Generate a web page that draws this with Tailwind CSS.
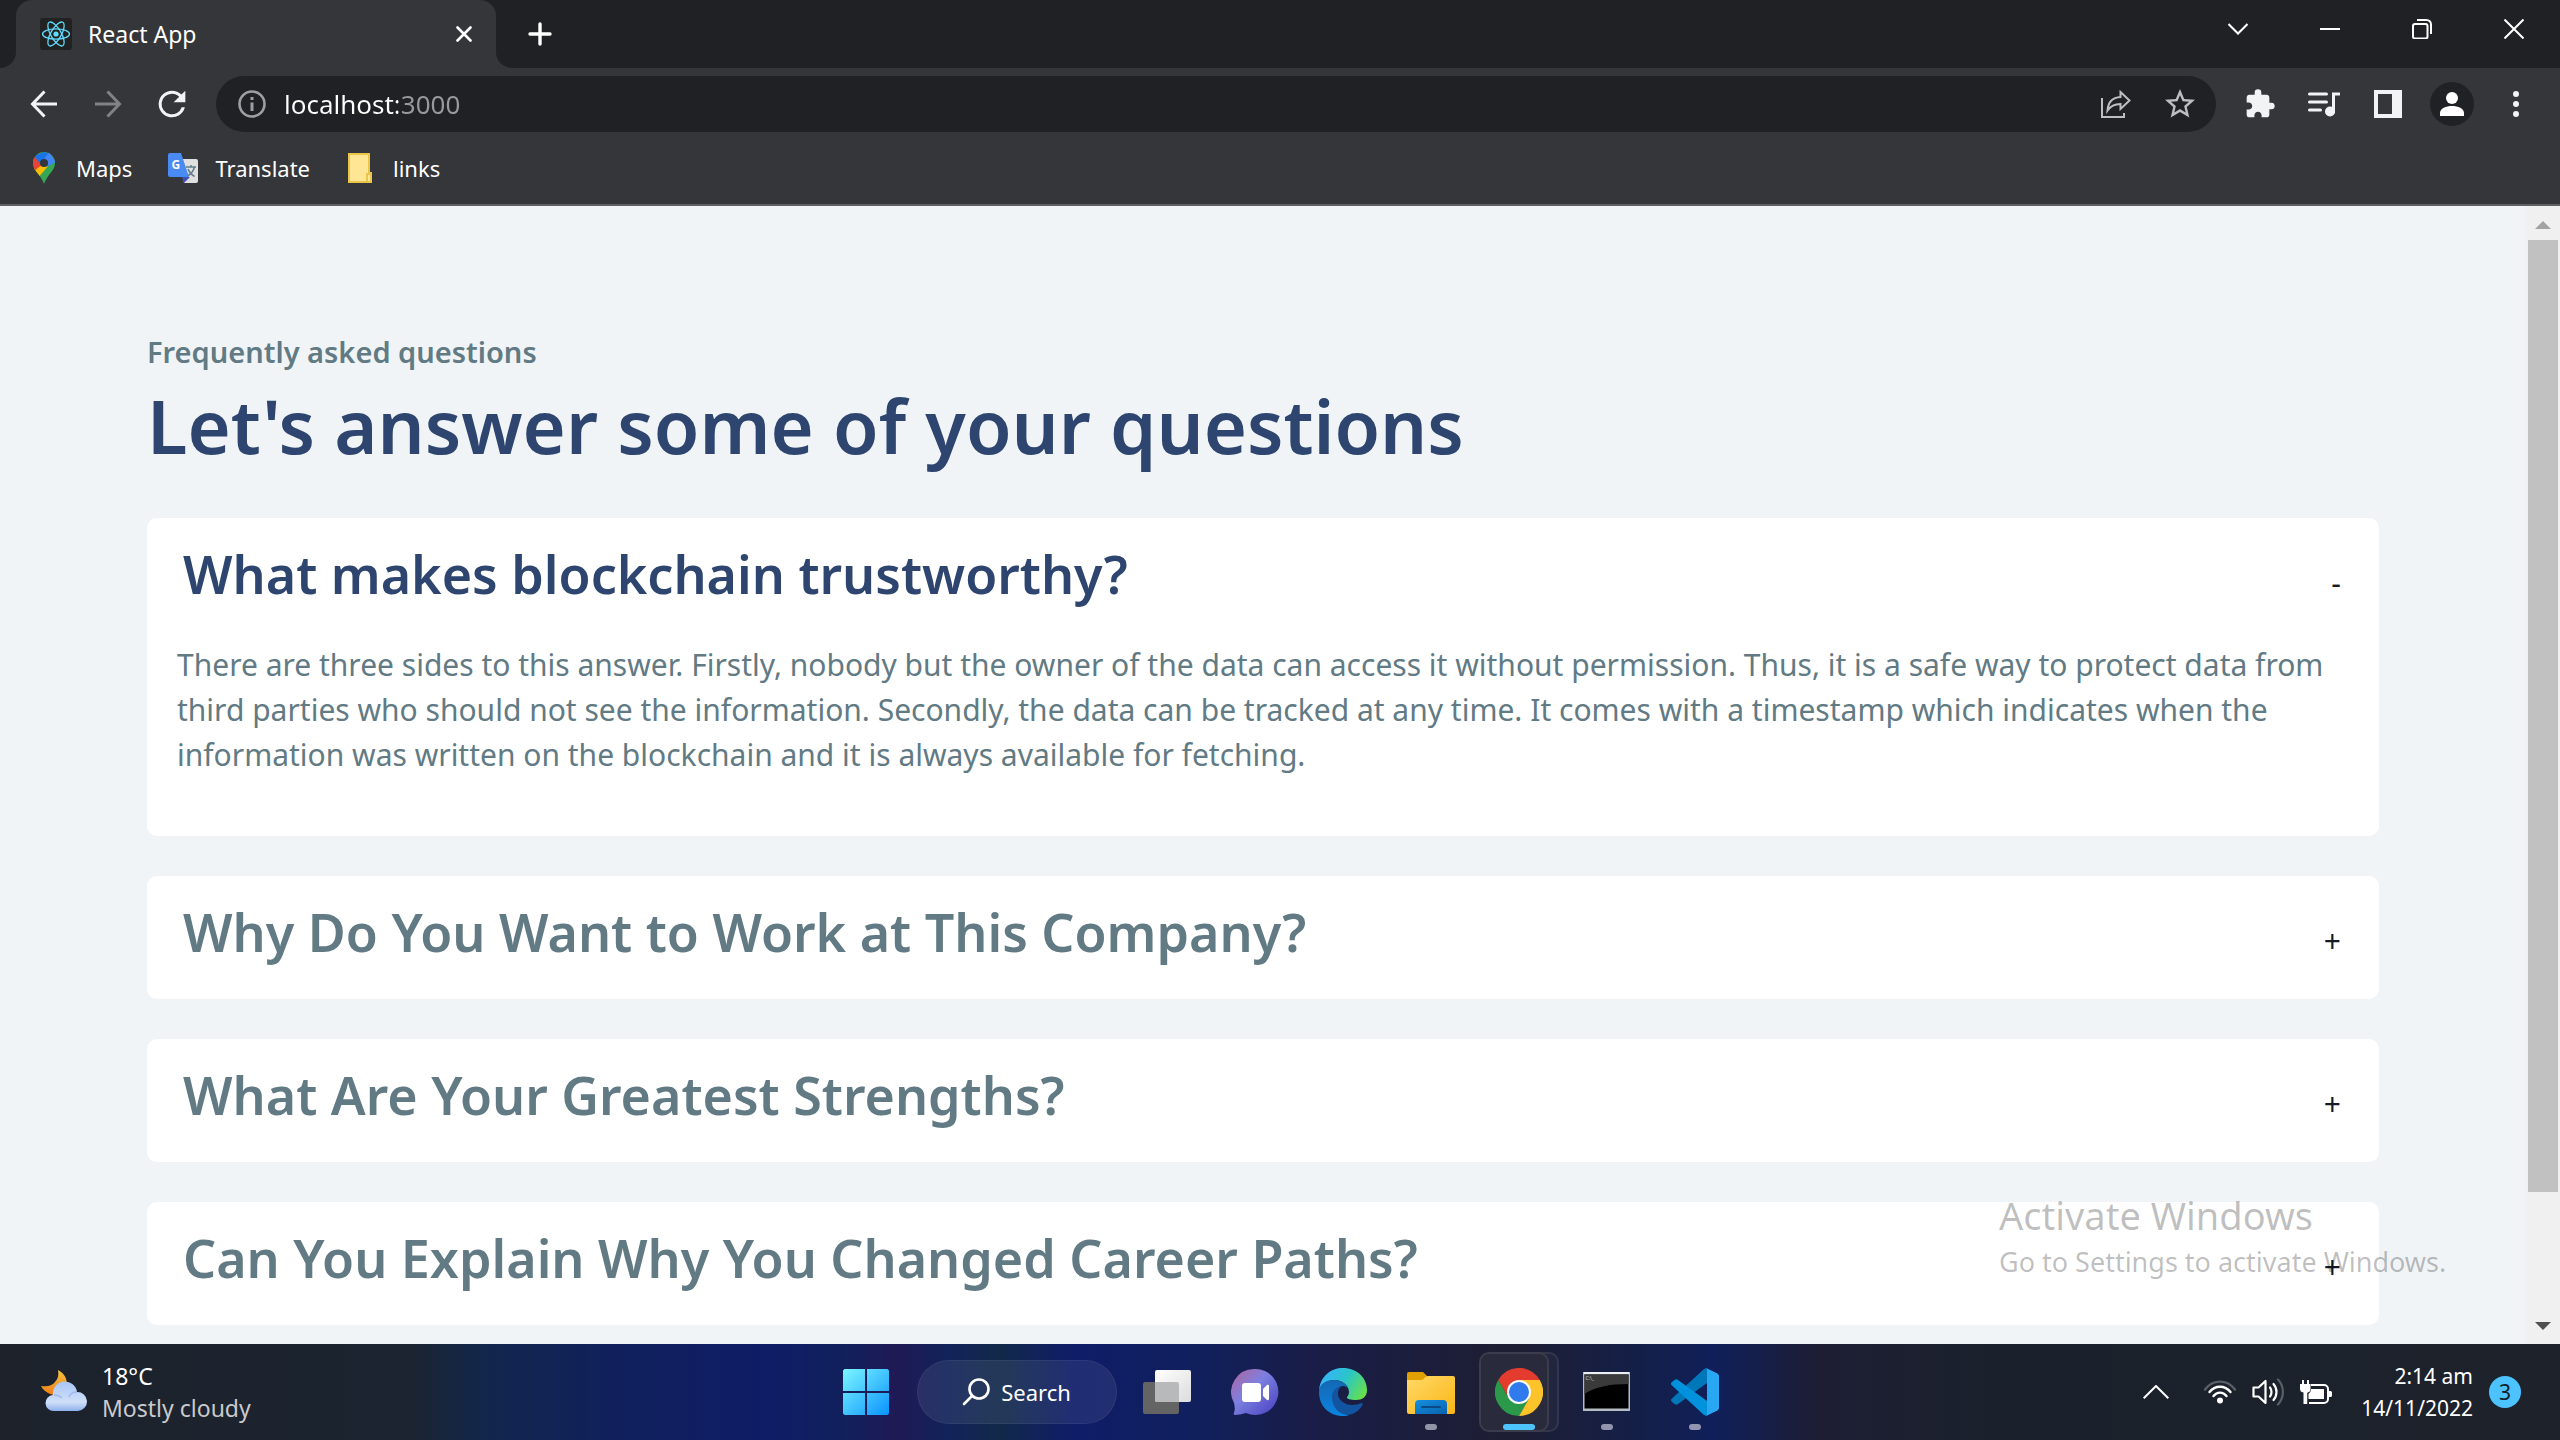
<!DOCTYPE html>
<html lang="en">
<head>
<meta charset="utf-8">
<title>React App</title>
<script src="https://cdn.jsdelivr.net/npm/@tailwindcss/browser@4"></script>
</head>
<body class="flex h-screen flex-col overflow-hidden bg-[#35363a] font-['Noto_Sans',sans-serif]">

<!-- Browser chrome -->
<header class="shrink-0 border-b-2 border-[#5f6063] bg-[#35363a] text-white">
  <div class="flex h-[68px]">
    <div class="w-4 rounded-br-2xl bg-[#202124]"></div>
    <div class="w-[480px] bg-[#202124]">
      <div class="flex h-full items-center rounded-t-2xl bg-[#35363a] pr-4 pl-6">
        <svg class="size-8" viewBox="0 0 32 32" fill="none">
          <rect width="32" height="32" rx="3" fill="#222"/>
          <circle cx="16" cy="16" r="2.6" fill="#61dafb"/>
          <g stroke="#61dafb" stroke-width="1.3">
            <ellipse cx="16" cy="16" rx="13.5" ry="5.2"/>
            <ellipse cx="16" cy="16" rx="13.5" ry="5.2" transform="rotate(60 16 16)"/>
            <ellipse cx="16" cy="16" rx="13.5" ry="5.2" transform="rotate(120 16 16)"/>
          </g>
        </svg>
        <span class="ml-4 flex-1 text-[23px] leading-8">React App</span>
        <button class="grid size-8 place-items-center" aria-label="Close tab">
          <svg class="size-4" viewBox="0 0 16 16" stroke="#fff" stroke-width="2.6" stroke-linecap="round"><path d="M1.500 1.500l13 13M14.500 1.500l-13 13"/></svg>
        </button>
      </div>
    </div>
    <div class="flex flex-1 items-start justify-between rounded-bl-2xl bg-[#202124] pl-5">
      <button class="grid h-[68px] w-12 place-items-center" aria-label="New tab">
        <svg class="size-6" viewBox="0 0 24 24" stroke="#fff" stroke-width="3.400" stroke-linecap="round"><path d="M12 2v20M2 12h20"/></svg>
      </button>
      <div class="flex">
        <button class="grid h-[58px] w-[92px] place-items-center" aria-label="Search tabs">
          <svg class="h-3 w-5" viewBox="0 0 20 12" fill="none" stroke="#fff" stroke-width="2"><path d="M.5 1L10 10.500 19.500 1"/></svg>
        </button>
        <button class="grid h-[58px] w-[92px] place-items-center" aria-label="Minimize">
          <svg class="h-0.5 w-5" viewBox="0 0 20 2"><path fill="#fff" d="M0 0h20v2H0z"/></svg>
        </button>
        <button class="grid h-[58px] w-[92px] place-items-center" aria-label="Restore">
          <svg class="size-5" viewBox="0 0 20 20" fill="none" stroke="#fff" stroke-width="2"><rect x="1" y="5" width="14.500" height="14.500" rx="2"/><path d="M5 1h9.500a4.500 4.500 0 0 1 4.500 4.500V15"/></svg>
        </button>
        <button class="grid h-[58px] w-[92px] place-items-center" aria-label="Close">
          <svg class="size-5" viewBox="0 0 20 20" stroke="#fff" stroke-width="2"><path d="M.5.5l19 19M19.500.5l-19 19"/></svg>
        </button>
      </div>
    </div>
  </div>

  <div class="flex h-[72px] items-center px-3">
    <button class="grid h-14 w-16 place-items-center" aria-label="Back">
      <svg class="size-7" viewBox="0 0 28 28" fill="none" stroke="#f1f3f4" stroke-width="3"><path d="M27 14H3M14.500 1.500L2.500 14l12 12.500"/></svg>
    </button>
    <button class="grid h-14 w-16 place-items-center" aria-label="Forward">
      <svg class="size-7" viewBox="0 0 28 28" fill="none" stroke="#818286" stroke-width="3"><path d="M1 14h24M13.500 1.500l12 12.500-12 12.500"/></svg>
    </button>
    <button class="grid h-14 w-16 place-items-center" aria-label="Reload">
      <svg class="size-10" viewBox="0 0 24 24" fill="#f1f3f4"><path d="M17.650 6.350A7.960 7.960 0 0 0 12 4a8 8 0 1 0 7.730 10h-1.900A6.200 6.200 0 1 1 12 5.800c1.700 0 3.200.7 4.340 1.850L13 11h7V4z"/></svg>
    </button>
    <div class="mx-3 flex h-14 flex-1 items-center rounded-full bg-[#202124] pr-1 pl-[22px]">
      <svg class="size-7" viewBox="0 0 28 28" fill="none"><circle cx="14" cy="14" r="12.500" stroke="#9aa0a6" stroke-width="2.600"/><path d="M14 12.500V21M14 7v3" stroke="#9aa0a6" stroke-width="3"/></svg>
      <input type="text" aria-label="Address" value="localhost:3000" class="ml-[18px] min-w-0 flex-1 bg-[linear-gradient(90deg,#fff_114px,#96999d_114px)] bg-clip-text text-[26px] leading-10 text-transparent outline-none">
      <button class="grid h-14 w-16 place-items-center" aria-label="Share">
        <svg class="h-7 w-[30px]" viewBox="0 0 30 28" fill="none" stroke="#bdbebf" stroke-width="2"><path d="M1 8v19h22v-4"/><path d="M19.500 2l9 8.500-9 8.500v-5C13 14 9.500 16 6.500 20.500 7 12.500 11.500 7.500 19.500 7z"/></svg>
      </button>
      <button class="grid h-14 w-16 place-items-center" aria-label="Bookmark this tab">
        <svg class="size-9" viewBox="0 0 24 24" fill="#bdbebf"><path d="M22 9.240l-7.190-.62L12 2 9.190 8.630 2 9.240l5.460 4.730L5.820 21 12 17.270 18.180 21l-1.630-7.030L22 9.240zM12 15.400l-3.760 2.270 1-4.280-3.320-2.880 4.380-.38L12 6.100l1.710 4.040 4.380.38-3.320 2.880 1 4.280L12 15.400z"/></svg>
      </button>
    </div>
    <button class="grid h-14 w-16 place-items-center" aria-label="Extensions">
      <svg class="size-8" viewBox="0 0 24 24" fill="#f1f3f4"><path d="M20.500 11H19V7c0-1.100-.9-2-2-2h-4V3.500a2.500 2.500 0 0 0-5 0V5H4c-1.100 0-1.990.9-1.990 2v3.800H3.500c1.490 0 2.700 1.210 2.700 2.700s-1.210 2.700-2.700 2.700H2V20c0 1.100.9 2 2 2h3.800v-1.500c0-1.490 1.210-2.700 2.700-2.700s2.700 1.210 2.700 2.700V22H17c1.100 0 2-.9 2-2v-4h1.500a2.500 2.500 0 0 0 0-5z"/></svg>
    </button>
    <button class="grid h-14 w-16 place-items-center" aria-label="Media control">
      <svg class="h-[26px] w-8" viewBox="0 0 32 26" fill="none" stroke="#f1f3f4" stroke-width="3" stroke-linecap="round"><path d="M1.500 3h17M1.500 11h17M1.500 19h11"/><path d="M25.500 21V3H31"/><circle cx="22" cy="20.500" r="5" fill="#f1f3f4" stroke="none"/></svg>
    </button>
    <button class="grid h-14 w-16 place-items-center" aria-label="Side panel">
      <svg class="size-7" viewBox="0 0 28 28" fill="#f1f3f4"><path fill-rule="evenodd" d="M0 0h28v28H0zM4 4v20h14V4z"/></svg>
    </button>
    <button class="grid h-14 w-16 place-items-center" aria-label="Profile">
      <svg class="size-11" viewBox="0 0 44 44" fill="#fff"><circle cx="22" cy="22" r="22" fill="#202124"/><circle cx="22" cy="16" r="6"/><path d="M10 34v-3c0-4.500 6-7 12-7s12 2.500 12 7v3z"/></svg>
    </button>
    <button class="grid h-14 w-16 place-items-center" aria-label="Menu">
      <svg class="h-[26px] w-1.5" viewBox="0 0 6 26" fill="#f1f3f4"><circle cx="3" cy="3" r="3"/><circle cx="3" cy="13" r="3"/><circle cx="3" cy="23" r="3"/></svg>
    </button>
  </div>

  <nav class="flex h-16 gap-[35px] px-7 pb-2 text-[22px]">
    <a href="#" class="flex items-center gap-4">
      <svg class="size-8" viewBox="0 0 32 32"><clipPath id="pin"><path d="M16 0a11 11 0 0 0-11 11c0 5 3 8 6 12 2.500 3.500 4 6 5 9 1-3 2.500-5.500 5-9 3-4 6-7 6-12A11 11 0 0 0 16 0z"/></clipPath><g clip-path="url(#pin)"><path fill="#34a853" d="M0 0h32v32H0z"/><path fill="#fbbc04" d="M4 19L16 6l6 6L9 27z"/><path fill="#ea4335" d="M4 3l12 8L5 20z"/><path fill="#1a73e8" d="M6 4L16 0l6 2-9 11z"/><path fill="#4285f4" d="M21 0l7 10-9 5-5-5z"/></g><circle cx="16" cy="11" r="4" fill="#35363a"/></svg>
      <span>Maps</span>
    </a>
    <a href="#" class="flex items-center gap-4">
      <svg class="size-8" viewBox="0 0 32 32"><path fill="#e0e0e0" d="M13 7h16a2 2 0 0 1 2 2v20a2 2 0 0 1-2 2H17z"/><path fill="#3c50b8" d="M15 25h8l-6 6z"/><path fill="#4a8af4" d="M3 1h11l8 24H3a2 2 0 0 1-2-2V3a2 2 0 0 1 2-2z"/><g fill="none" stroke="#607d8b" stroke-width="1.500"><path d="M19 15h10M24 13v2M27.500 15c-1 4-3.500 7-7 9M21 17c1.500 4 4 6 6.500 7.500"/></g><text x="4.500" y="17" font-size="12" font-weight="700" fill="#fff">G</text></svg>
      <span>Translate</span>
    </a>
    <a href="#" class="flex items-center gap-4">
      <svg class="size-8" viewBox="0 0 32 32"><path fill="#ffe694" stroke="#eac54a" stroke-width="2" d="M4 2h20v19h2v9H4z"/><path fill="#ffe694" stroke="#eac54a" stroke-width="2" d="M22 22h4v8h-4z"/></svg>
      <span>links</span>
    </a>
  </nav>
</header>

<!-- Page -->
<div class="relative flex min-h-0 flex-1 bg-[#f0f4f7]">
  <main class="min-w-0 flex-1 overflow-hidden px-[147px] pt-[124px]">
    <p class="text-[29px] leading-[44px] font-semibold text-[#617a83]">Frequently asked questions</p>
    <h1 class="mt-1 text-[74px] leading-[96px] font-semibold text-[#2e466f]">Let's answer some of your questions</h1>
    <div class="mt-11 flex flex-col gap-10">
      <section class="rounded-[10px] bg-white">
        <button class="flex w-full items-start justify-between pt-4 pr-[38px] pb-[9px] pl-9 text-left" aria-expanded="true">
          <span class="text-[52px] leading-[80px] font-semibold text-[#2e466f]">What makes blockchain trustworthy?</span>
          <span class="text-[30px] leading-[98px] text-[#141c28]">-</span>
        </button>
        <p class="px-[30px] pt-px pb-[59px] text-[30px] leading-[45px] text-[#617a83]">There are three sides to this answer. Firstly, nobody but the owner of the data can access it without permission. Thus, it is a safe way to protect data from third parties who should not see the information. Secondly, the data can be tracked at any time. It comes with a timestamp which indicates when the information was written on the blockchain and it is always available for fetching.</p>
      </section>
      <section class="rounded-[10px] bg-white">
        <button class="flex w-full items-start justify-between pt-4 pr-[38px] pb-[9px] pl-9 text-left" aria-expanded="false">
          <span class="text-[52px] leading-[80px] font-semibold text-[#617a83]">Why Do You Want to Work at This Company?</span>
          <span class="text-[30px] leading-[98px] text-[#141c28]">+</span>
        </button>
      </section>
      <section class="rounded-[10px] bg-white">
        <button class="flex w-full items-start justify-between pt-4 pr-[38px] pb-[9px] pl-9 text-left" aria-expanded="false">
          <span class="text-[52px] leading-[80px] font-semibold text-[#617a83]">What Are Your Greatest Strengths?</span>
          <span class="text-[30px] leading-[98px] text-[#141c28]">+</span>
        </button>
      </section>
      <section class="rounded-[10px] bg-white">
        <button class="flex w-full items-start justify-between pt-4 pr-[38px] pb-[9px] pl-9 text-left" aria-expanded="false">
          <span class="text-[52px] leading-[80px] font-semibold text-[#617a83]">Can You Explain Why You Changed Career Paths?</span>
          <span class="text-[30px] leading-[98px] text-[#141c28]">+</span>
        </button>
      </section>
    </div>
  </main>

  <div class="flex w-[34px] flex-col bg-[#f0f0f0]">
    <div class="grid h-[34px] place-items-center pt-1"><svg class="h-2 w-4" viewBox="0 0 16 8" fill="#a3a3a3"><path d="M0 8l8-8 8 8z"/></svg></div>
    <div class="flex-1 px-0.5"><div class="h-[89%] bg-[#c1c1c1]"></div></div>
    <div class="grid h-[34px] place-items-center pb-0.5"><svg class="h-2 w-4" viewBox="0 0 16 8" fill="#505050"><path d="M0 0h16L8 8z"/></svg></div>
  </div>

  <!-- Activation watermark, drawn over the page -->
  <div class="pointer-events-none absolute right-[104px] bottom-[59px] w-[457px] text-black/26">
    <p class="text-[38px] leading-[48px]">Activate Windows</p>
    <p class="text-[27px] leading-[46px] whitespace-nowrap">Go to Settings to activate Windows.</p>
  </div>
</div>

<!-- Taskbar -->
<footer class="grid h-24 shrink-0 grid-cols-[1fr_auto_1fr] items-center bg-[linear-gradient(90deg,#1d222b_0%,#1b2430_16%,#12264c_19%,#11205c_24%,#0f1c66_30%,#11205c_33%,#1f1a56_35%,#12225a_37%,#12294a_39%,#0f1c68_42%,#11205c_47%,#191d48_51%,#1e1e32_59%,#141f48_64%,#101f5a_67%,#1d1e34_71%,#1b212c_78%,#1d222b_100%)] text-white">
  <button class="flex items-center gap-[14px] pl-10 text-left text-[23px] leading-8">
    <svg class="size-12" viewBox="0 0 48 48">
      <defs>
        <linearGradient id="moon" x1="0" y1="0" x2="0" y2="1"><stop stop-color="#f5c544"/><stop offset="1" stop-color="#f07c13"/></linearGradient>
        <linearGradient id="cloud" x1="0" y1="0" x2="0" y2="1"><stop stop-color="#a9c5f7"/><stop offset=".7" stop-color="#cfdff8"/><stop offset="1" stop-color="#8fb0ec"/></linearGradient>
      </defs>
      <path fill="url(#moon)" d="M18 2c8 4 11 12 7 19-4 7-10 7-15 5-4-2-7-4-9-8 6 1 11 0 14-4 3-3 4-7 3-12z"/>
      <path fill="url(#cloud)" d="M14 43a8 8 0 0 1-1-16 12 12 0 0 1 24-3 9.500 9.500 0 0 1 1 19z"/>
      <path fill="none" stroke="#86a6ea" stroke-opacity=".6" stroke-width="1.500" d="M14 27c4 0 6 1 8 3M29 29c1-3 4-5 8-5"/>
    </svg>
    <span><span class="block">18°C</span><span class="block text-[#c9cacc]">Mostly cloudy</span></span>
  </button>

  <div class="flex h-24 items-center">
    <button class="grid h-20 w-[88px] place-items-center" aria-label="Start">
      <svg class="size-[46px]" viewBox="0 0 46 46"><defs><linearGradient id="win" x1="0" y1="0" x2="46" y2="46" gradientUnits="userSpaceOnUse"><stop stop-color="#7cf6ff"/><stop offset="1" stop-color="#0a93ff"/></linearGradient></defs><path fill="url(#win)" d="M1.500 0H22v22H0V1.500zM24 0h20.500L46 1.500V22H24zM0 24h22v22H1.500L0 44.500zM24 24h22v20.500L44.500 46H24z"/></svg>
    </button>
    <button class="mr-1.5 ml-[7px] flex h-16 w-[200px] items-center justify-center gap-[11px] rounded-full border border-white/5 bg-white/8 text-[22px]">
      <svg class="size-7" viewBox="0 0 28 28" fill="none" stroke="#fff" stroke-width="2.600" stroke-linecap="round"><circle cx="17" cy="11" r="9.500"/><path d="M10 18l-8 8"/></svg>
      <span>Search</span>
    </button>
    <button class="grid h-20 w-[88px] place-items-center" aria-label="Task view">
      <svg class="size-12" viewBox="0 0 48 48"><defs><linearGradient id="tv" x1="0" y1="0" x2="1" y2="1"><stop stop-color="#fff"/><stop offset="1" stop-color="#dcdcdc"/></linearGradient></defs><rect y="14" width="36" height="32" rx="2" fill="#646464"/><rect x="12" y="2" width="36" height="32" rx="2" fill="url(#tv)"/><path fill="#b8b9ba" d="M12 14h22a2 2 0 0 1 2 2v18H14a2 2 0 0 1-2-2z"/></svg>
    </button>
    <button class="grid h-20 w-[88px] place-items-center" aria-label="Chat">
      <svg class="size-12" viewBox="0 0 48 48"><defs><linearGradient id="chat" x1=".1" y1=".2" x2=".8" y2=".9"><stop stop-color="#a06db4"/><stop offset=".4" stop-color="#7d80e0"/><stop offset="1" stop-color="#5450c8"/></linearGradient></defs><path fill="url(#chat)" d="M24 1a23 23 0 1 1-9 44c-4 1-8 2-11 2-1 0-2-1-1-2 1-3 1-6 0-10A23 23 0 0 1 24 1z"/><rect x="11" y="15" width="19" height="19" rx="3" fill="#fff"/><path fill="#fff" d="M32 21l4-4c1-.5 2 0 2 1v13c0 1-1 1.500-2 1l-4-4z"/></svg>
    </button>
    <button class="grid h-20 w-[88px] place-items-center" aria-label="Edge">
      <svg class="size-12" viewBox="0 0 48 48">
        <defs>
          <linearGradient id="e1" x1="0" y1=".3" x2="1" y2=".7"><stop stop-color="#37b3ff"/><stop offset=".5" stop-color="#2bc5c8"/><stop offset="1" stop-color="#68e04a"/></linearGradient>
          <linearGradient id="e2" x1="0" y1="0" x2="0" y2="1"><stop stop-color="#1468b4"/><stop offset="1" stop-color="#0a84e0"/></linearGradient>
        </defs>
        <path fill="url(#e1)" d="M0 23C1 8 12 0 24 0c14 0 24 10 24 22 0 7-5 10-11 10-5 0-10-1-9-3 1-1 2-3 2-5 0-6-6-12-15-12C7 12 1 17 0 23z"/>
        <path fill="url(#e2)" d="M0 24c0-8 7-12 15-12s15 6 15 12c0-4-3-6-6-6-5 0-9 5-9 11 0 9 7 17 15 18-2 1-4 1-6 1C10 48 0 38 0 24z"/>
        <path fill="#1254a0" d="M24 18c-4 1-5 4-5 8 0 6 7 11 14 11 4 0 7-1 9-2 2 0 2 1 1 3-4 6-10 9-15 9-9-1-15-9-15-18 0-7 5-11 11-11z"/>
      </svg>
    </button>
    <button class="relative grid h-20 w-[88px] place-items-center" aria-label="File Explorer">
      <svg class="size-12" viewBox="0 0 48 48"><defs><linearGradient id="fe" x1="0" y1="0" x2="1" y2="1"><stop stop-color="#ffd968"/><stop offset="1" stop-color="#fbb616"/></linearGradient><linearGradient id="fb" x1="0" y1="0" x2="1" y2="1"><stop stop-color="#1490df"/><stop offset="1" stop-color="#0a62b0"/></linearGradient></defs><path fill="#dfa000" d="M2 4h14l4 4v8H0V6a2 2 0 0 1 2-2z"/><path fill="url(#fe)" d="M0 12h14c3 0 4-4 7-4h25a2 2 0 0 1 2 2v34a2 2 0 0 1-2 2H2a2 2 0 0 1-2-2z"/><path fill="url(#fb)" d="M8 46V36a4 4 0 0 1 4-4h24a4 4 0 0 1 4 4v10z"/><rect x="14" y="38" width="20" height="2" rx="1" fill="#0b4a87"/></svg>
      <span class="absolute bottom-0.5 left-[38px] h-1.5 w-3 rounded-full bg-[#9294a8]"></span>
    </button>
    <button class="relative grid h-20 w-[88px] place-items-center" aria-label="Google Chrome">
      <span class="absolute inset-y-0 right-1 w-8 rounded-r-[10px] border-2 border-l-0 border-white/8 bg-white/3"></span>
      <span class="absolute inset-y-0 right-[14px] left-1 rounded-[10px] border-2 border-[#3b3c4c] bg-[#292a3b]"></span>
      <svg class="relative size-12" viewBox="0 0 48 48"><path fill="#e33b2e" d="M3.200 12A24 24 0 0 1 44.800 12H24L13.600 30z"/><path fill="#2a9a4a" d="M3.200 12L13.600 30 24 36l10.400-6L24 48A24 24 0 0 1 3.200 12z"/><path fill="#fcc32a" d="M44.800 12A24 24 0 0 1 24 48l10.400-18L24 12z"/><circle cx="24" cy="24" r="12" fill="#fff"/><circle cx="24" cy="24" r="10" fill="#2f7bee"/></svg>
      <span class="absolute bottom-0.5 left-7 h-1.5 w-8 rounded-full bg-[#4cc2ff]"></span>
    </button>
    <button class="relative grid h-20 w-[88px] place-items-center" aria-label="Command Prompt">
      <svg class="size-12" viewBox="0 0 48 48"><path fill="#b4bcc4" d="M0 4h47v39H0z"/><path fill="#eceff2" d="M1 4h45v2H1z"/><path fill="#000" d="M1.500 6.500h44v34h-44z"/><path fill="#3a3a3a" d="M1.500 6.500h44V16C26 16 12 19 1.500 26z"/><text x="2.500" y="12" font-size="5" fill="#d0d0d0">C:\_</text></svg>
      <span class="absolute bottom-0.5 left-[38px] h-1.5 w-3 rounded-full bg-[#9294b0]"></span>
    </button>
    <button class="relative grid h-20 w-[88px] place-items-center" aria-label="Visual Studio Code">
      <svg class="size-12" viewBox="0 0 48 48"><path fill="#0077b9" d="M33 1l3-1v15L7 36c-1 1-2 1-3.500 0L.7 33.700c-1-1-1-2 0-3z"/><path fill="#0092dc" d="M.7 17.300c-1-1-1-2 0-3L3.500 12c1.500-1 2.500-1 3.500 0l29 21v15l-3-1z"/><path fill="#28a8f2" d="M35 0l11.500 5.500L48 7.500v33l-1.500 2L35 48c.8-.5 1-1 1-2V2c0-1-.2-1.500-1-2z"/></svg>
      <span class="absolute bottom-0.5 left-[38px] h-1.5 w-3 rounded-full bg-[#9294b0]"></span>
    </button>
  </div>

  <div class="flex items-center justify-end pr-[39px]">
    <button class="grid h-16 w-20 place-items-center" aria-label="Show hidden icons">
      <svg class="h-3.5 w-[26px]" viewBox="0 0 26 14" fill="none" stroke="#fff" stroke-width="2"><path d="M.7 13.300L13 1l12.300 12.300"/></svg>
    </button>
    <button class="grid h-16 w-12 place-items-center" aria-label="Network">
      <svg class="h-6 w-8" viewBox="0 0 32 24" fill="none" stroke="#fff" stroke-width="2.400" stroke-linecap="round"><path stroke="#5a5e66" d="M1 9.500C9-1 23-1 31 9.500"/><path d="M5.500 12C11 5 21 5 26.500 12M9.500 16c3.500-4.500 9.500-4.500 13 0"/><circle cx="16" cy="20.500" r="3" fill="#fff" stroke="none"/></svg>
    </button>
    <button class="grid h-16 w-12 place-items-center" aria-label="Volume">
      <svg class="h-7 w-8" viewBox="0 0 32 28" fill="none" stroke="#fff" stroke-width="2.200" stroke-linecap="round" stroke-linejoin="round"><path d="M1.500 9.500h5l7-6.500v22l-7-6.500h-5z"/><path d="M18 9.500c2 2.500 2 6.500 0 9M21.500 6c4 4.500 4 11.500 0 16"/><path stroke="#5a5e66" d="M26 1.500c6.500 7 6.500 18 0 25"/></svg>
    </button>
    <button class="grid h-16 w-12 place-items-center" aria-label="Battery">
      <svg class="h-6 w-8" viewBox="0 0 32 24" fill="none" stroke="#fff" stroke-width="2"><path d="M11 5h13a4 4 0 0 1 4 4v10a4 4 0 0 1-4 4H9"/><path fill="#fff" stroke="none" d="M11 9h13v10H8v-5c2-1 3-3 3-5zM28 11h2.500q1.500 0 1.500 1.500v3q0 1.500-1.500 1.500H28zM2 0h2v4h3V0h2v4h1.500v5q0 3-3 3.500V24h-4V12.500Q0 12 0 9V4h2z"/><path stroke="#1c212b" stroke-width="1" d="M8 13v11"/></svg>
    </button>
    <button class="ml-[21px] text-right text-[21px] leading-8"><span class="block">2:14 am</span><span class="block">14/11/2022</span></button>
    <button class="ml-4 grid size-8 place-items-center rounded-full bg-[#4cc2ff] text-[21px] leading-8 text-[#10202c]" aria-label="3 notifications">3</button>
  </div>
</footer>
</body>
</html>
